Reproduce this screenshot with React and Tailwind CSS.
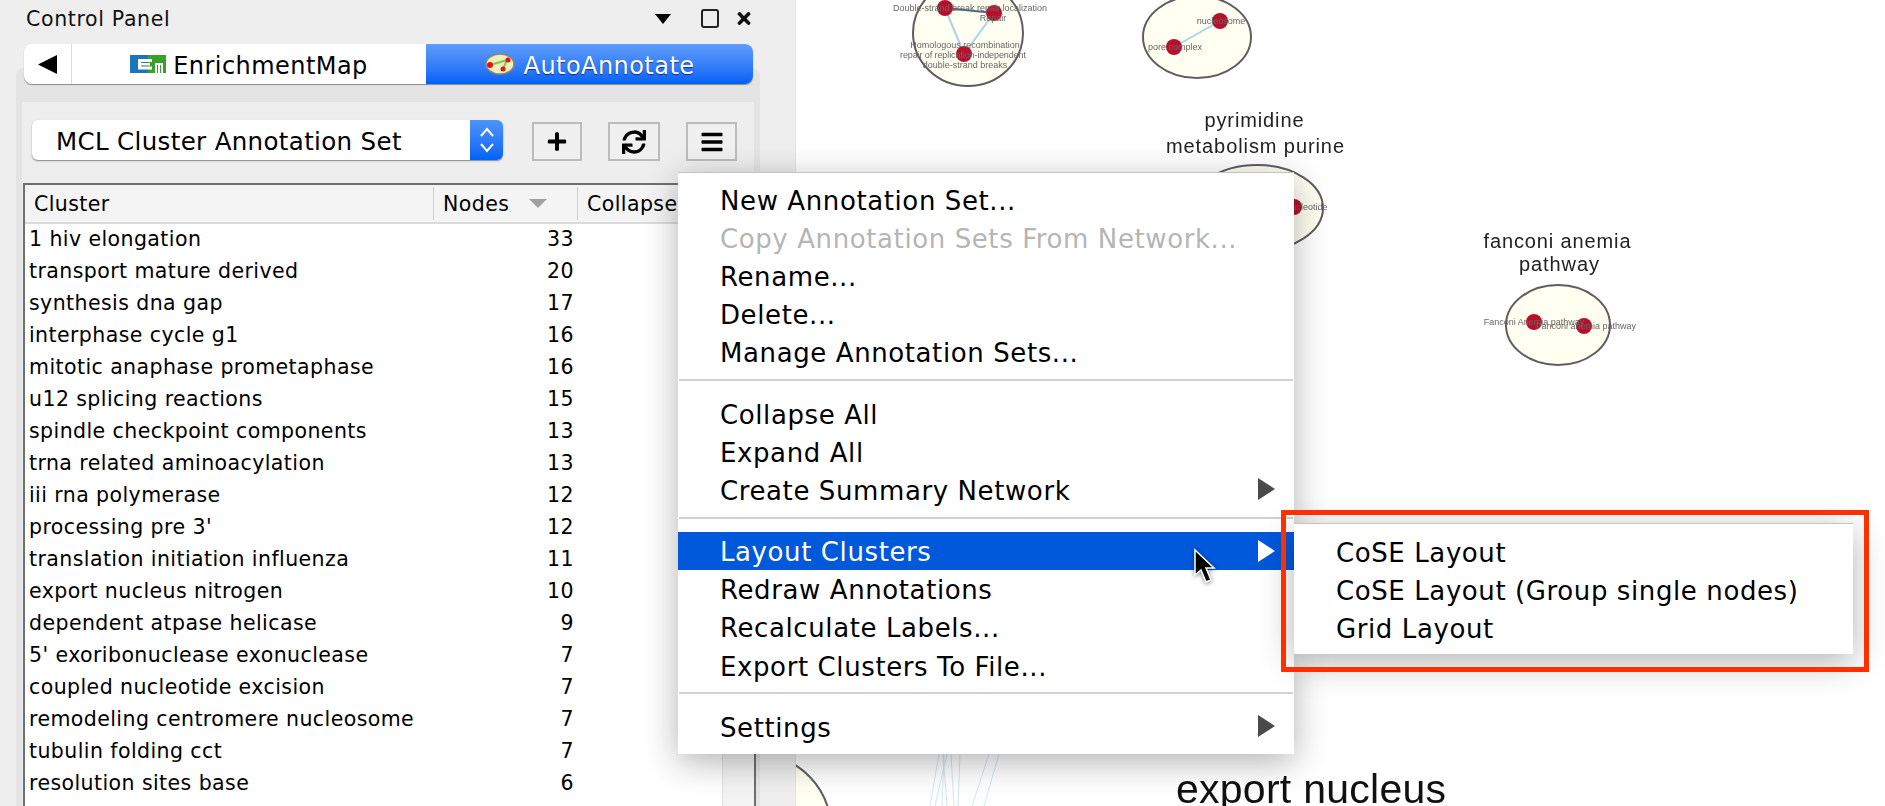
import React from "react";
import { FaPlus, FaSync, FaBars, FaTimes } from "react-icons/fa";

const rows = [
  ["1 hiv elongation", 33],
  ["transport mature derived", 20],
  ["synthesis dna gap", 17],
  ["interphase cycle g1", 16],
  ["mitotic anaphase prometaphase", 16],
  ["u12 splicing reactions", 15],
  ["spindle checkpoint components", 13],
  ["trna related aminoacylation", 13],
  ["iii rna polymerase", 12],
  ["processing pre 3'", 12],
  ["translation initiation influenza", 11],
  ["export nucleus nitrogen", 10],
  ["dependent atpase helicase", 9],
  ["5' exoribonuclease exonuclease", 7],
  ["coupled nucleotide excision", 7],
  ["remodeling centromere nucleosome", 7],
  ["tubulin folding cct", 7],
  ["resolution sites base", 6],
  ["ribonucleotide biosynthesis purine", 6],
];

function Arrow({ white }) {
  return (
    <svg width="17" height="22" viewBox="0 0 17 22" className="shrink-0">
      <path d="M0 0 L17 11 L0 22 Z" fill={white ? "#ffffff" : "#4a4a4a"} />
    </svg>
  );
}

function Item({ label, disabled, arrow, active }) {
  return (
    <div
      className={`h-[38.2px] flex items-center justify-between pl-[42px] pr-[19px] ${
        active ? "bg-[#0058db] text-white" : disabled ? "text-[#b5b5b5]" : "text-black"
      }`}
    >
      <span className="pt-[4px]">{label}</span>
      {arrow && <Arrow white={active} />}
    </div>
  );
}

function Sep() {
  return <div className="mt-2 mb-[13px] h-[2px] bg-[#d2d2d2] mx-[1px]" />;
}

function Network() {
  const node = "#b8102c";
  const label = "#666666";
  return (
    <svg viewBox="797 0 1088 806" width="1088" height="806" className="block blur-[0.5px]">
      <g fill="#fffff2" stroke="#5e5e5e" strokeWidth="2">
        <ellipse cx="969" cy="33" rx="55" ry="53" />
        <ellipse cx="1198" cy="37" rx="54" ry="41" />
        <ellipse cx="1258" cy="208" rx="66" ry="43" />
        <ellipse cx="1559" cy="325" rx="52" ry="40" />
        <ellipse cx="760" cy="830" rx="72" ry="75" />
      </g>
      <g stroke="#a9d5ea" strokeWidth="2" fill="none">
        <path d="M946 8 L965 54 M995 13 L965 54 M1221 21 L1175 47" />
      </g>
      <path d="M946 8 L995 13" stroke="#4f6b7a" strokeWidth="2" />
      <g stroke="#d3e6f0" strokeWidth="1" fill="none">
        <path d="M931 806 L940 754 M936 806 L948 754 M943 806 L945 754 M948 806 L944 754 M955 806 L952 754 M959 806 L961 754 M973 806 L990 754 M985 806 L1000 754" />
      </g>
      <g fill={node}>
        <circle cx="946" cy="8" r="8" />
        <circle cx="995" cy="13" r="8" />
        <circle cx="965" cy="54" r="8" />
        <circle cx="1221" cy="21" r="8" />
        <circle cx="1175" cy="47" r="8" />
        <circle cx="1295" cy="207" r="8" />
        <circle cx="1535" cy="322" r="8" />
        <circle cx="1585" cy="326" r="8" />
      </g>
      <g fontFamily="'Liberation Sans', sans-serif" fontSize="9" fill={label} textAnchor="middle">
        <text x="971" y="11" textLength="154">Double-strand break repair localization</text>
        <text x="994" y="21">Repair</text>
        <text x="966" y="48">Homologous recombination</text>
        <text x="964" y="58" textLength="126">repair of replication-independent</text>
        <text x="966" y="68">double-strand breaks</text>
        <text x="1222" y="24">nucleosome</text>
        <text x="1176" y="50">pore complex</text>
        <text x="1308" y="210">nucleotide</text>
        <text x="1535" y="325">Fanconi Anemia pathway</text>
        <text x="1587" y="329">Fanconi anemia pathway</text>
      </g>
      <g fontFamily="'Liberation Sans', sans-serif" fontSize="20" fill="#222222" textAnchor="middle">
        <text x="1255" y="127" textLength="99">pyrimidine</text>
        <text x="1256" y="153" textLength="178">metabolism purine</text>
        <text x="1558" y="248" textLength="147">fanconi anemia</text>
        <text x="1560" y="271" textLength="80">pathway</text>
      </g>
      <text x="1312" y="803" fontFamily="'Liberation Sans', sans-serif" fontSize="41" fill="#111111" textAnchor="middle" textLength="270">
        export nucleus
      </text>
    </svg>
  );
}

export default function App() {
  return (
    <div className="relative flex h-[806px] w-[1885px] overflow-hidden bg-white font-['DejaVu_Sans',sans-serif] text-black">
      {/* Control panel */}
      <div className="flex h-full w-[796px] shrink-0 flex-col bg-[#eeeeee] border-r border-r-[#e2e2e2]">
        <div className="flex h-[44px] shrink-0 items-center pl-[26px] pr-[42px] pb-[7px] text-[20.5px] tracking-[0.65px] text-[#111]">
          <span className="flex-1 pt-[2px]">Control Panel</span>
          <svg width="16" height="10" viewBox="0 0 16 10" className="mr-[30px]">
            <path d="M0 0 H16 L8 10 Z" fill="#000" />
          </svg>
          <div className="mr-[16px] h-[19px] w-[18px] rounded-[3px] border-2 border-[#222]" />
          <FaTimes className="h-[19px] w-[18px]" />
        </div>

        <div className="relative z-10 mx-[24px] flex h-[40px] w-[729px] shrink-0 rounded-lg bg-white text-[24px] tracking-[0.45px] shadow-[0_1px_1px_rgba(0,0,0,0.4)]">
          <div className="flex w-[48px] items-center justify-center border-r border-r-[#dddddd]">
            <svg width="19" height="19" viewBox="0 0 19 19">
              <path d="M19 0 V19 L0 9.5 Z" fill="#000" />
            </svg>
          </div>
          <div className="flex w-[354px] items-center justify-center gap-[7px]">
            <svg width="36" height="18" viewBox="0 0 36 18">
              <rect width="18" height="18" fill="#1b75bb" />
              <rect x="18" width="18" height="18" fill="#39a12b" />
              <path d="M8 4 H22 V7 H11 V8 H20 V10.5 H11 V11.5 H22 V14.5 H8 Z" fill="#fff" />
              <path d="M25 8 H33 V18 H31 V10 H30 V18 H28 V10 H27 V18 H25 Z" fill="#fff" />
            </svg>
            <span className="pt-[4px]">EnrichmentMap</span>
          </div>
          <div className="flex flex-1 items-center justify-center gap-[9px] rounded-r-lg bg-gradient-to-b from-[#5f9dfb] to-[#0060f6] text-white [text-shadow:0_1px_1px_rgba(0,0,60,0.6)]">
            <svg width="30" height="22" viewBox="0 0 30 22">
              <ellipse cx="15" cy="11" rx="14" ry="10" fill="#eef0b8" stroke="#8a8a70" strokeWidth="1.5" />
              <path d="M5 12 L22 7 L18 16" stroke="#7ec850" strokeWidth="2" fill="none" />
              <circle cx="5" cy="12" r="3" fill="#e8101a" />
              <circle cx="23" cy="7" r="2.5" fill="#e8101a" />
              <circle cx="18" cy="16" r="2.5" fill="#e8101a" />
            </svg>
            <span className="pt-[4px]">AutoAnnotate</span>
          </div>
        </div>

        <div className="-mt-[16px] ml-[16px] flex min-h-0 w-[744px] flex-1 flex-col rounded-t-lg bg-[#e4e4e4] px-[6px] pt-[34px]">
          <div className="flex min-h-0 flex-1 flex-col bg-[#eeeeee]">
            <div className="mt-[18px] ml-[10px] flex h-[41px] shrink-0 items-start">
              <div className="flex h-[40px] w-[471px] items-stretch rounded-md bg-white text-[24.5px] tracking-[0.35px] shadow-[0_1px_1.5px_rgba(0,0,0,0.45)]">
                <span className="flex flex-1 items-center pl-[24px] pt-[5px]">MCL Cluster Annotation Set</span>
                <div className="flex w-[33px] items-center justify-center rounded-r-md bg-gradient-to-b from-[#4d94fb] to-[#0062f5]">
                  <svg width="18" height="30" viewBox="0 0 18 30" fill="none" stroke="#fff" strokeWidth="2">
                    <path d="M3 11 L9 4 L15 11 M3 19 L9 26 L15 19" />
                  </svg>
                </div>
              </div>
              <button className="ml-[29px] mt-[2px] flex h-[39px] w-[50px] items-center justify-center border-2 border-[#bcbcbc] bg-[#f0f0f0]">
                <FaPlus className="h-[21px] w-[22px]" />
              </button>
              <button className="ml-[26px] mt-[2px] flex h-[39px] w-[52px] items-center justify-center border-2 border-[#bcbcbc] bg-[#f0f0f0]">
                <FaSync className="h-[24px] w-[24px]" />
              </button>
              <button className="ml-[26px] mt-[2px] flex h-[39px] w-[51px] items-center justify-center border-2 border-[#bcbcbc] bg-[#f0f0f0]">
                <FaBars className="h-[24px] w-[24px]" />
              </button>
            </div>

            <div className="ml-[1px] mt-[22px] flex min-h-0 w-[733px] flex-1 flex-col overflow-hidden border-x-2 border-t-2 border-[#6f6f6f] bg-white text-[20.5px] tracking-[0.42px]">
              <div className="flex h-[39px] shrink-0 items-center border-b-2 border-b-[#dcdcdc] bg-[#f4f4f4]">
                <div className="w-[408px] pl-[9px] pt-[2px]">Cluster</div>
                <div className="flex w-[144px] items-center border-l border-l-[#cfcfcf] pl-[9px]">
                  <span className="w-[86px] pt-[2px]">Nodes</span>
                  <svg width="18" height="9" viewBox="0 0 18 9">
                    <path d="M0 0 H18 L9 9 Z" fill="#a0a0a0" />
                  </svg>
                </div>
                <div className="flex-1 border-l border-l-[#cfcfcf] pl-[9px] pt-[2px]">Collapsed</div>
              </div>
              <div className="flex min-h-0 flex-1">
                <div className="-mt-[1px] w-[697px] shrink-0 overflow-hidden">
                  {rows.map(([name, n]) => (
                    <div key={name} className="flex h-[32.05px] items-center">
                      <div className="w-[408px] pl-[4px]">{name}</div>
                      <div className="w-[144px] pr-[3px] text-right">{n}</div>
                    </div>
                  ))}
                </div>
                <div className="flex-1 border-l border-l-[#e0e0e0] bg-[#f3f3f3]" />
              </div>
            </div>
          </div>
        </div>
      </div>

      {/* Network canvas */}
      <div className="min-w-0 flex-1 overflow-hidden bg-white">
        <Network />
      </div>

      {/* Context menu */}
      <div className="absolute left-[678px] top-[172px] h-[582px] w-[616px] border-t border-t-[#c4c4c4] bg-white pt-[7px] text-[26px] tracking-[0.6px] shadow-[0_8px_32px_rgba(0,0,0,0.3)]">
        <Item label="New Annotation Set..." />
        <Item label="Copy Annotation Sets From Network..." disabled />
        <Item label="Rename..." />
        <Item label="Delete..." />
        <Item label="Manage Annotation Sets..." />
        <Sep />
        <Item label="Collapse All" />
        <Item label="Expand All" />
        <Item label="Create Summary Network" arrow />
        <Sep />
        <Item label="Layout Clusters" arrow active />
        <Item label="Redraw Annotations" />
        <Item label="Recalculate Labels..." />
        <Item label="Export Clusters To File..." />
        <Sep />
        <Item label="Settings" arrow />
      </div>

      {/* Submenu */}
      <div className="absolute left-[1294px] top-[523px] h-[131px] w-[559px] border-t border-t-[#c4c4c4] bg-white pt-[8px] text-[26px] tracking-[0.6px] shadow-[0_8px_32px_rgba(0,0,0,0.3)]">
        <Item label="CoSE Layout" />
        <Item label="CoSE Layout (Group single nodes)" />
        <Item label="Grid Layout" />
      </div>

      {/* Highlight rectangle */}
      <div className="pointer-events-none absolute left-[1281px] top-[510px] h-[162px] w-[588px] border-[5px] border-[#ff2f00]" />

      {/* Mouse cursor */}
      <svg width="24" height="38" viewBox="0 0 24 38" className="absolute left-[1193px] top-[548px] drop-shadow-[0_1px_2px_rgba(0,0,0,0.5)]">
        <path d="M2 2 L2 27 L8 22 L13 34 L18 32 L13 20 L21 20 Z" fill="#000" stroke="#fff" strokeWidth="1.5" />
      </svg>
    </div>
  );
}
